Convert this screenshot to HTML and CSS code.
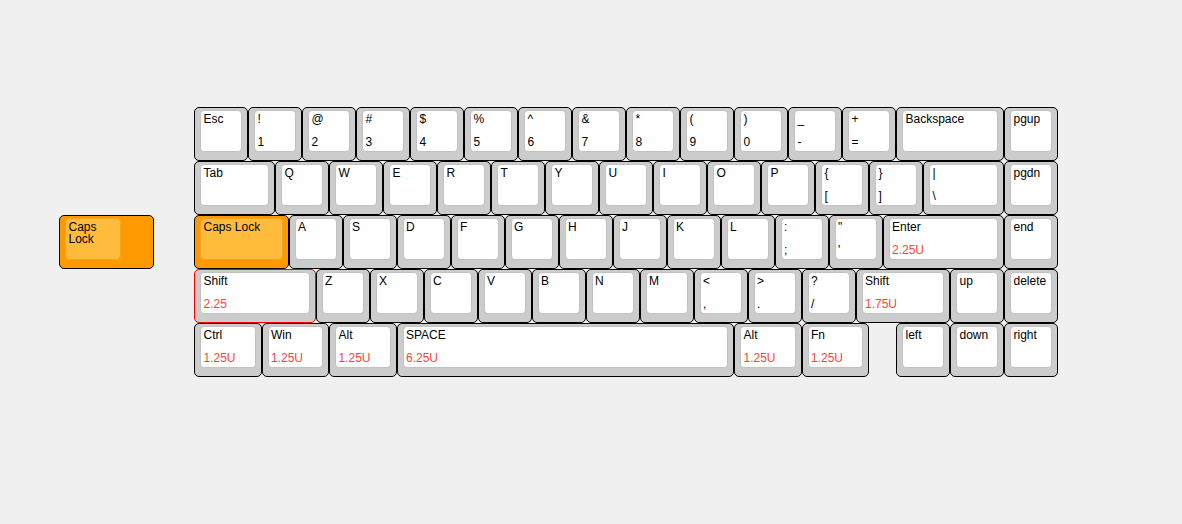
FILE: index.html
```html
<!DOCTYPE html>
<html>
<head>
<meta charset="utf-8">
<link rel="stylesheet" href="styles.css">
</head>
<body>
<div class="page">
  <div class="float-col">
    <div class="key w175 orange">
      <div class="cap cap-narrow"><span class="t">Caps Lock</span></div>
    </div>
  </div>
  <div class="board">
    <div class="row">
      <div class="key w1"><div class="cap"><span class="t">Esc</span></div></div>
      <div class="key w1"><div class="cap"><span class="t">!</span><span class="b">1</span></div></div>
      <div class="key w1"><div class="cap"><span class="t">@</span><span class="b">2</span></div></div>
      <div class="key w1"><div class="cap"><span class="t">#</span><span class="b">3</span></div></div>
      <div class="key w1"><div class="cap"><span class="t">$</span><span class="b">4</span></div></div>
      <div class="key w1"><div class="cap"><span class="t">%</span><span class="b">5</span></div></div>
      <div class="key w1"><div class="cap"><span class="t">^</span><span class="b">6</span></div></div>
      <div class="key w1"><div class="cap"><span class="t">&amp;</span><span class="b">7</span></div></div>
      <div class="key w1"><div class="cap"><span class="t">*</span><span class="b">8</span></div></div>
      <div class="key w1"><div class="cap"><span class="t">(</span><span class="b">9</span></div></div>
      <div class="key w1"><div class="cap"><span class="t">)</span><span class="b">0</span></div></div>
      <div class="key w1"><div class="cap"><span class="t">_</span><span class="b">-</span></div></div>
      <div class="key w1"><div class="cap"><span class="t">+</span><span class="b">=</span></div></div>
      <div class="key w2"><div class="cap"><span class="t">Backspace</span></div></div>
      <div class="key w1"><div class="cap"><span class="t">pgup</span></div></div>
    </div>
    <div class="row">
      <div class="key w15"><div class="cap"><span class="t">Tab</span></div></div>
      <div class="key w1"><div class="cap"><span class="t">Q</span></div></div>
      <div class="key w1"><div class="cap"><span class="t">W</span></div></div>
      <div class="key w1"><div class="cap"><span class="t">E</span></div></div>
      <div class="key w1"><div class="cap"><span class="t">R</span></div></div>
      <div class="key w1"><div class="cap"><span class="t">T</span></div></div>
      <div class="key w1"><div class="cap"><span class="t">Y</span></div></div>
      <div class="key w1"><div class="cap"><span class="t">U</span></div></div>
      <div class="key w1"><div class="cap"><span class="t">I</span></div></div>
      <div class="key w1"><div class="cap"><span class="t">O</span></div></div>
      <div class="key w1"><div class="cap"><span class="t">P</span></div></div>
      <div class="key w1"><div class="cap"><span class="t">{</span><span class="b">[</span></div></div>
      <div class="key w1"><div class="cap"><span class="t">}</span><span class="b">]</span></div></div>
      <div class="key w15"><div class="cap"><span class="t">|</span><span class="b">\</span></div></div>
      <div class="key w1"><div class="cap"><span class="t">pgdn</span></div></div>
    </div>
    <div class="row">
      <div class="key w175 orange"><div class="cap"><span class="t">Caps Lock</span></div></div>
      <div class="key w1"><div class="cap"><span class="t">A</span></div></div>
      <div class="key w1"><div class="cap"><span class="t">S</span></div></div>
      <div class="key w1"><div class="cap"><span class="t">D</span></div></div>
      <div class="key w1"><div class="cap"><span class="t">F</span></div></div>
      <div class="key w1"><div class="cap"><span class="t">G</span></div></div>
      <div class="key w1"><div class="cap"><span class="t">H</span></div></div>
      <div class="key w1"><div class="cap"><span class="t">J</span></div></div>
      <div class="key w1"><div class="cap"><span class="t">K</span></div></div>
      <div class="key w1"><div class="cap"><span class="t">L</span></div></div>
      <div class="key w1"><div class="cap"><span class="t">:</span><span class="b">;</span></div></div>
      <div class="key w1"><div class="cap"><span class="t">"</span><span class="b">'</span></div></div>
      <div class="key w225"><div class="cap"><span class="t">Enter</span><span class="b red">2.25U</span></div></div>
      <div class="key w1"><div class="cap"><span class="t">end</span></div></div>
    </div>
    <div class="row">
      <div class="key w225 selected"><div class="cap"><span class="t">Shift</span><span class="b red">2.25</span></div></div>
      <div class="key w1"><div class="cap"><span class="t">Z</span></div></div>
      <div class="key w1"><div class="cap"><span class="t">X</span></div></div>
      <div class="key w1"><div class="cap"><span class="t">C</span></div></div>
      <div class="key w1"><div class="cap"><span class="t">V</span></div></div>
      <div class="key w1"><div class="cap"><span class="t">B</span></div></div>
      <div class="key w1"><div class="cap"><span class="t">N</span></div></div>
      <div class="key w1"><div class="cap"><span class="t">M</span></div></div>
      <div class="key w1"><div class="cap"><span class="t">&lt;</span><span class="b">,</span></div></div>
      <div class="key w1"><div class="cap"><span class="t">&gt;</span><span class="b">.</span></div></div>
      <div class="key w1"><div class="cap"><span class="t">?</span><span class="b">/</span></div></div>
      <div class="key w175"><div class="cap"><span class="t">Shift</span><span class="b red">1.75U</span></div></div>
      <div class="key w1"><div class="cap"><span class="t">up</span></div></div>
      <div class="key w1"><div class="cap"><span class="t">delete</span></div></div>
    </div>
    <div class="row">
      <div class="key w125"><div class="cap"><span class="t">Ctrl</span><span class="b red">1.25U</span></div></div>
      <div class="key w125"><div class="cap"><span class="t">Win</span><span class="b red">1.25U</span></div></div>
      <div class="key w125"><div class="cap"><span class="t">Alt</span><span class="b red">1.25U</span></div></div>
      <div class="key w625"><div class="cap"><span class="t">SPACE</span><span class="b red">6.25U</span></div></div>
      <div class="key w125"><div class="cap"><span class="t">Alt</span><span class="b red">1.25U</span></div></div>
      <div class="key w125"><div class="cap"><span class="t">Fn</span><span class="b red">1.25U</span></div></div>
      <div class="spacer"></div>
      <div class="key w1"><div class="cap"><span class="t">left</span></div></div>
      <div class="key w1"><div class="cap"><span class="t">down</span></div></div>
      <div class="key w1"><div class="cap"><span class="t">right</span></div></div>
    </div>
  </div>
</div>
</body>
</html>
```

FILE: styles.css
```css
html, body {
  margin: 0;
  padding: 0;
  background: #f0f0f0;
}

body {
  width: 1182px;
  height: 524px;
  overflow: hidden;
  font-family: "Liberation Sans", Arial, sans-serif;
  font-size: 12px;
  color: #000;
}

.page {
  display: flex;
  align-items: flex-start;
  padding: 107px 0 0 59px;
}

.float-col {
  margin-top: 108px;
  margin-right: 40.5px;
}

.board {
  display: flex;
  flex-direction: column;
}

.row {
  display: flex;
}

.key {
  box-sizing: border-box;
  height: 54px;
  border: 1px solid #000;
  border-radius: 5px;
  background: #cccccc;
  flex: none;
}

.key.selected {
  border-color: #ff0000;
}

.w1 { width: 54px; }
.w125 { width: 67.5px; }
.w15 { width: 81px; }
.w175 { width: 94.5px; }
.w2 { width: 108px; }
.w225 { width: 121.5px; }
.w625 { width: 337.5px; }

.spacer {
  width: 27px;
  flex: none;
}

.cap {
  box-sizing: border-box;
  margin: 2px 5px 0 5px;
  height: 42px;
  border: 1px solid #c2c2c2;
  border-radius: 4px;
  background: #ffffff;
  display: flex;
  flex-direction: column;
  justify-content: space-between;
  padding: 2px 3px 3px 2.5px;
  line-height: 12px;
  overflow: hidden;
}

.orange {
  background: #ff9900;
}

.orange .cap {
  background: #ffbb3c;
  border-color: #f0a428;
}

.cap-narrow {
  width: 55.5px;
}

.t, .b {
  display: block;
  white-space: normal;
}

.red {
  color: #ff4238;
}
```
